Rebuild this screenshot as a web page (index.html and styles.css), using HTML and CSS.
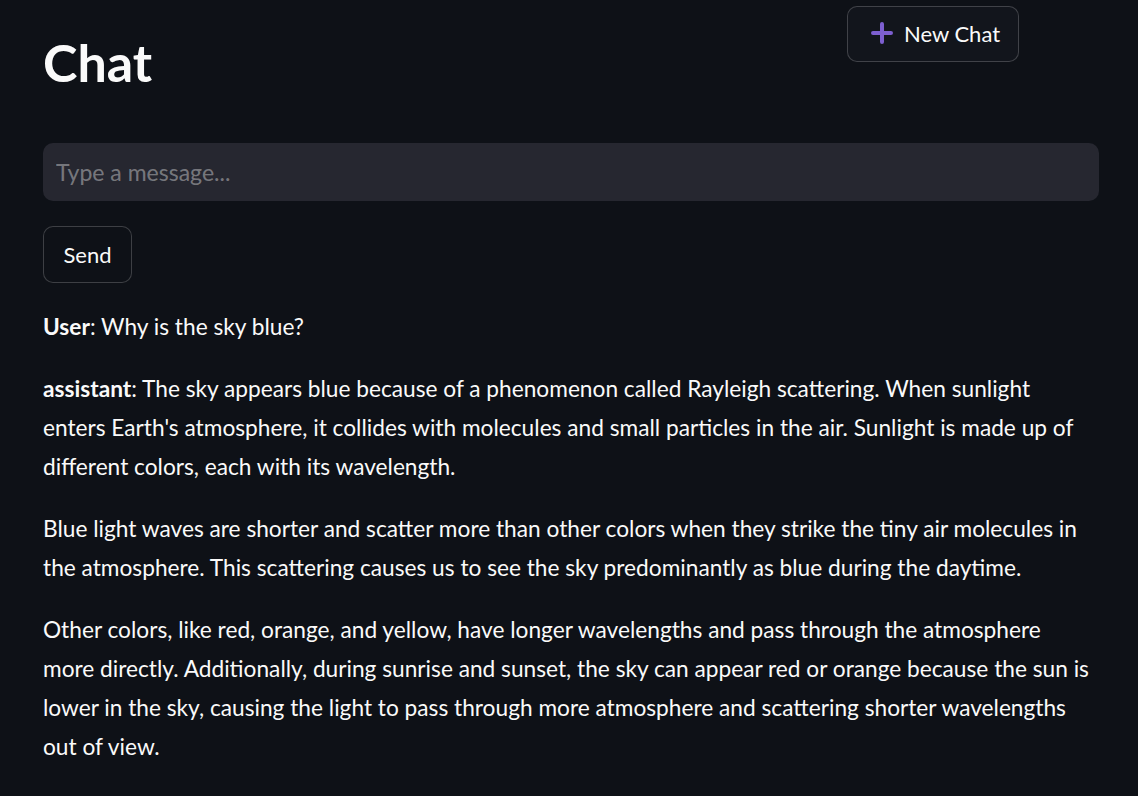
FILE: index.html
```html
<!DOCTYPE html>
<html>
<head>
<meta charset="utf-8">
<link rel="stylesheet" href="styles.css">
</head>
<body>
<main class="app">
  <header class="head">
    <h1 class="title">Chat</h1>
    <div class="head-side">
      <button class="btn btn-new" type="button">
        <svg class="plus" viewBox="0 0 24 24" width="24" height="24" aria-hidden="true"><path d="M12 3v18M3 12h18" stroke="#7d5fd0" stroke-width="4" stroke-linecap="round" fill="none"/></svg>
        <span>New Chat</span>
      </button>
    </div>
  </header>
  <div class="field">
    <input class="input" type="text" placeholder="Type a message...">
  </div>
  <div class="send-row">
    <button class="btn btn-send" type="button">Send</button>
  </div>
  <section class="messages">
    <p><strong>User</strong>: Why is the sky blue?</p>
    <p><strong>assistant</strong>: The sky appears blue because of a phenomenon called Rayleigh scattering. When sunlight<br>enters Earth's atmosphere, it collides with molecules and small particles in the air. Sunlight is made up of<br>different colors, each with its wavelength.</p>
    <p>Blue light waves are shorter and scatter more than other colors when they strike the tiny air molecules in<br>the atmosphere. This scattering causes us to see the sky predominantly as blue during the daytime.</p>
    <p>Other colors, like red, orange, and yellow, have longer wavelengths and pass through the atmosphere<br>more directly. Additionally, during sunrise and sunset, the sky can appear red or orange because the sun is<br>lower in the sky, causing the light to pass through more atmosphere and scattering shorter wavelengths<br>out of view.</p>
  </section>
</main>
</body>
</html>
```
FILE: styles.css
```css
html, body {
  margin: 0;
  padding: 0;
  background: #0e1117;
  color: #fafafa;
  font-family: Lato, "Noto Sans", sans-serif;
}
.app {
  width: 1056px;
  padding: 0 0 0 43px;
}
.head {
  display: grid;
  grid-template-columns: 804px 1fr;
  align-items: start;
}
.title {
  margin: 0;
  padding-top: 32px;
  font-size: 52px;
  font-weight: 700;
  line-height: 60px;
}
.head-side {
  padding-top: 6px;
}
.btn {
  font-family: inherit;
  color: #fafafa;
  background: #0e1117;
  border: 1px solid rgba(250, 250, 250, 0.2);
  border-radius: 10px;
  font-size: 22px;
  cursor: pointer;
}
.btn-new {
  display: flex;
  align-items: center;
  gap: 10px;
  height: 56px;
  width: 172px;
  padding: 0 0 2px 22px;
  background: #12151c;
}
.plus {
  width: 24px;
  height: 24px;
}
.field {
  margin-top: 51px;
}
.input {
  box-sizing: border-box;
  width: 100%;
  height: 58px;
  border: none;
  border-radius: 10px;
  background: #262730;
  color: #fafafa;
  font-family: inherit;
  font-size: 23px;
  padding: 0 13px;
  outline: none;
}
.input::placeholder {
  color: rgba(250, 250, 250, 0.4);
}
.send-row {
  margin-top: 25px;
}
.btn-send {
  width: 89px;
  height: 57px;
}
.messages {
  margin-top: 24px;
}
.messages p {
  margin: 0 0 23px;
  font-size: 22.7px;
  line-height: 39px;
}
.messages strong {
  font-weight: 700;
}
```
